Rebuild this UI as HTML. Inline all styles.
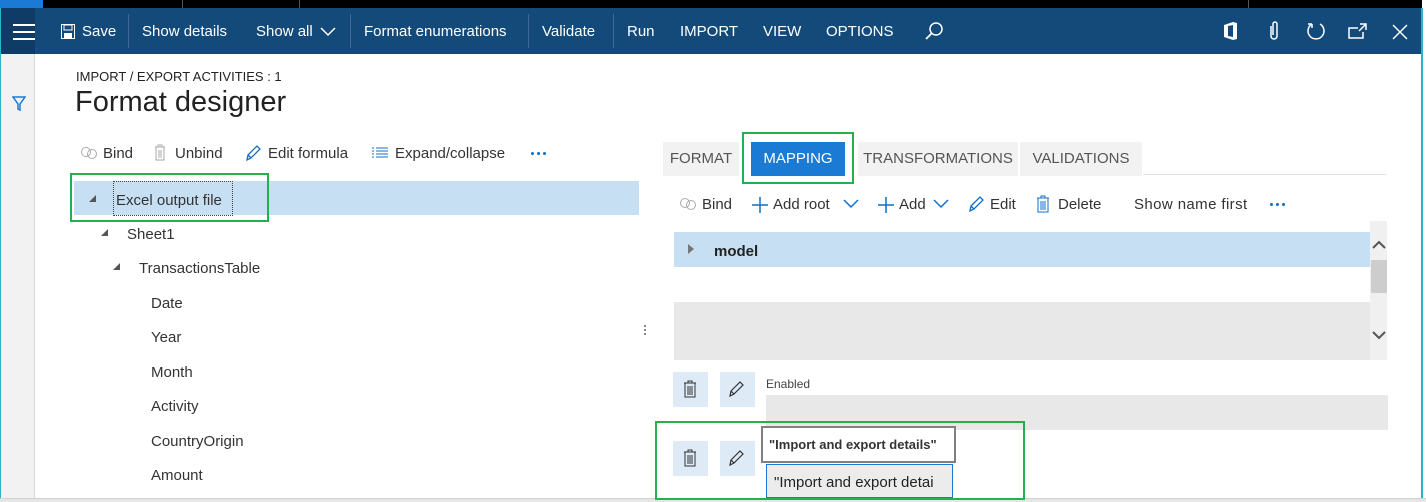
<!DOCTYPE html>
<html><head><style>
*{margin:0;padding:0;box-sizing:border-box}
body{width:1426px;height:502px;overflow:hidden;background:#fff;font-family:"Liberation Sans",sans-serif;position:relative;color:#333}
.a{position:absolute;white-space:nowrap}
.nav{font-size:15px;color:#fff;top:23px}
.sep{position:absolute;top:14px;width:1px;height:34px;background:#3d6a96}
.blue{color:#0f6fc6}
.gray{color:#a6a6a6}
.t{font-size:15px;color:#333}
.g{position:absolute;border:2px solid #22b14c}
.tab{position:absolute;top:142px;height:34px;background:#f2f2f2;font-size:15px;color:#555;line-height:34px;text-align:center}
.dots{position:absolute;width:3px;height:3px;background:#0f6fc6;border-radius:50%;box-shadow:6px 0 #0f6fc6,12px 0 #0f6fc6}
</style></head><body>
<div class="a" style="left:0;top:0;width:1426px;height:8px;background:#000"></div>
<div class="a" style="left:0;top:0;width:43px;height:8px;background:#1a7ad4"></div>
<div class="a" style="left:182px;top:0;width:1px;height:8px;background:#555"></div>
<div class="a" style="left:299px;top:0;width:1px;height:8px;background:#555"></div>
<div class="a" style="left:1248px;top:0;width:1px;height:8px;background:#555"></div>
<div class="a" style="left:0;top:8px;width:1426px;height:46px;background:#134a7a"></div>
<div class="a" style="left:1px;top:8px;width:34px;height:46px;background:#0f3c66"></div>
<div class="a" style="left:1422px;top:0;width:4px;height:502px;background:#fff"></div>
<div class="a" style="left:1421px;top:8px;width:2px;height:494px;background:#2bb5c8"></div>
<div class="a" style="left:0;top:8px;width:1px;height:494px;background:#2bb5c8"></div>
<div class="a" style="left:13px;top:24px;width:22px;height:2px;background:#fff"></div>
<div class="a" style="left:13px;top:31px;width:22px;height:2px;background:#fff"></div>
<div class="a" style="left:13px;top:38px;width:22px;height:2px;background:#fff"></div>
<svg class="a" style="left:61px;top:24px" width="14" height="15" viewBox="0 0 14 15"><rect x="0.5" y="0.5" width="13" height="14" fill="none" stroke="#fff"/><rect x="3" y="1" width="8" height="5" fill="none" stroke="#fff"/><rect x="3" y="9" width="8" height="5" fill="#fff"/></svg>
<div class="a nav" style="left:82px">Save</div>
<div class="sep" style="left:128px"></div>
<div class="a nav" style="left:142px">Show details</div>
<div class="a nav" style="left:256px">Show all</div>
<svg class="a" style="left:320px;top:27px" width="16" height="10"><path d="M1 1l7 7 7-7" stroke="#fff" fill="none" stroke-width="1.5"/></svg>
<div class="sep" style="left:350px"></div>
<div class="a nav" style="left:364px">Format enumerations</div>
<div class="sep" style="left:528px"></div>
<div class="a nav" style="left:542px">Validate</div>
<div class="sep" style="left:613px"></div>
<div class="a nav" style="left:627px">Run</div>
<div class="a nav" style="left:680px">IMPORT</div>
<div class="a nav" style="left:763px">VIEW</div>
<div class="a nav" style="left:826px">OPTIONS</div>
<svg class="a" style="left:924px;top:21px" width="20" height="20"><circle cx="12" cy="8" r="6" stroke="#fff" fill="none" stroke-width="1.5"/><path d="M8 12l-6 6" stroke="#fff" stroke-width="1.8"/></svg>
<svg class="a" style="left:1222px;top:22px" width="16" height="18"><path d="M2 3l9-3 4 1v16l-4 1-9-3z" fill="#fff"/><path d="M6 4l5-1v12l-5-1z" fill="#134a7a"/></svg>
<svg class="a" style="left:1268px;top:21px" width="12" height="20"><path d="M3 5v10a3 3 0 006 0V3a2 2 0 00-4 0v11" stroke="#fff" fill="none" stroke-width="1.5"/></svg>
<svg class="a" style="left:1305px;top:20px" width="22" height="22"><path d="M7 4A8 8 0 1015 4" stroke="#fff" fill="none" stroke-width="1.5"/><path d="M7 4h-4M7 4v4" stroke="#fff" stroke-width="1.5"/></svg>
<svg class="a" style="left:1348px;top:23px" width="20" height="16"><path d="M10 5H1v10h14V9M12 1h6v6M18 1l-7 7" stroke="#fff" fill="none" stroke-width="1.5"/></svg>
<svg class="a" style="left:1392px;top:24px" width="16" height="16"><path d="M1 1l14 14M15 1L1 15" stroke="#fff" stroke-width="1.5"/></svg>
<div class="a" style="left:1px;top:54px;width:34px;height:446px;background:#f2f2f2;border-right:1px solid #d8d8d8"></div>
<svg class="a" style="left:12px;top:96px" width="14" height="16"><path d="M1 1h12l-5 7v6l-2-1V8z" stroke="#1a7ad4" fill="none" stroke-width="1.5"/></svg>
<div class="a" style="left:0;top:498px;width:1426px;height:4px;background:#e6e6e6;border-top:1px solid #d0d0d0"></div>
<div class="a" style="left:76px;top:69px;font-size:13px;color:#222">IMPORT / EXPORT ACTIVITIES : 1</div>
<div class="a" style="left:75px;top:86px;font-size:29px;color:#222">Format designer</div>
<svg class="a" style="left:80px;top:146px" width="18" height="14"><circle cx="6" cy="6" r="4.5" stroke="#aaa" fill="none"/><circle cx="12" cy="8" r="4.5" stroke="#aaa" fill="none"/></svg>
<div class="a t gray" style="left:103px;top:145px">Bind</div>
<svg class="a" style="left:154px;top:144px" width="12" height="17"><path d="M1 3h10M4 3V1h4v2M2 3v13h8V3M5 6v8M7 6v8" stroke="#aaa" fill="none"/></svg>
<div class="a t gray" style="left:175px;top:145px">Unbind</div>
<svg class="a" style="left:245px;top:144px" width="18" height="18"><path d="M2 16l1-5 9-9 3 3-9 9zM3 11l3 3" stroke="#0f6fc6" fill="none" stroke-width="1.3"/></svg>
<div class="a t blue" style="left:268px;top:145px">Edit formula</div>
<svg class="a" style="left:372px;top:147px" width="16" height="12"><path d="M0 1h2M4 1h12M0 4h2M4 4h12M0 7h2M4 7h12M0 10h2M4 10h12" stroke="#0f6fc6"/></svg>
<div class="a t blue" style="left:395px;top:145px">Expand/collapse</div>
<div class="dots" style="left:531px;top:152px"></div>
<div class="a" style="left:74px;top:181px;width:565px;height:34px;background:#c7dff2"></div>
<div class="a" style="left:113px;top:181px;width:120px;height:35px;border:1px dotted #444"></div>
<div class="a" style="left:89px;top:195px;width:0;height:0;border-left:7px solid transparent;border-bottom:7px solid #555"></div>
<div class="a t" style="left:116px;top:192px">Excel output file</div>
<div class="g" style="left:70px;top:173px;width:199px;height:49px"></div>
<div class="a" style="left:101px;top:229px;width:0;height:0;border-left:7px solid transparent;border-bottom:7px solid #555"></div>
<div class="a t" style="left:127px;top:226px">Sheet1</div>
<div class="a" style="left:113px;top:263px;width:0;height:0;border-left:7px solid transparent;border-bottom:7px solid #555"></div>
<div class="a t" style="left:139px;top:260px">TransactionsTable</div>
<div class="a t" style="left:151px;top:295px">Date</div>
<div class="a t" style="left:151px;top:329px">Year</div>
<div class="a t" style="left:151px;top:364px">Month</div>
<div class="a t" style="left:151px;top:398px">Activity</div>
<div class="a t" style="left:151px;top:433px">CountryOrigin</div>
<div class="a t" style="left:151px;top:467px">Amount</div>
<div class="a" style="left:644px;top:325px;width:2px;height:2px;background:#888;box-shadow:0 4px #888,0 8px #888"></div>
<div class="tab" style="left:663px;width:76px">FORMAT</div>
<div class="tab" style="left:751px;width:94px;background:#1a7ad4;color:#fff">MAPPING</div>
<div class="g" style="left:742px;top:132px;width:112px;height:52px"></div>
<div class="tab" style="left:858px;width:160px">TRANSFORMATIONS</div>
<div class="tab" style="left:1020px;width:122px">VALIDATIONS</div>
<div class="a" style="left:1143px;top:174px;width:243px;height:1px;background:#e0e0e0"></div>
<svg class="a" style="left:679px;top:197px" width="18" height="14"><circle cx="6" cy="6" r="4.5" stroke="#aaa" fill="none"/><circle cx="12" cy="8" r="4.5" stroke="#aaa" fill="none"/></svg>
<div class="a t gray" style="left:702px;top:196px">Bind</div>
<svg class="a" style="left:751px;top:196px" width="18" height="18"><path d="M9 1v16M1 9h16" stroke="#0f6fc6" stroke-width="1.5"/></svg>
<div class="a t blue" style="left:773px;top:196px">Add root</div>
<svg class="a" style="left:843px;top:199px" width="16" height="10"><path d="M1 1l7 7 7-7" stroke="#0f6fc6" fill="none" stroke-width="1.5"/></svg>
<svg class="a" style="left:877px;top:196px" width="18" height="18"><path d="M9 1v16M1 9h16" stroke="#0f6fc6" stroke-width="1.5"/></svg>
<div class="a t blue" style="left:899px;top:196px">Add</div>
<svg class="a" style="left:933px;top:199px" width="16" height="10"><path d="M1 1l7 7 7-7" stroke="#0f6fc6" fill="none" stroke-width="1.5"/></svg>
<svg class="a" style="left:968px;top:195px" width="18" height="18"><path d="M2 16l1-5 9-9 3 3-9 9zM3 11l3 3" stroke="#0f6fc6" fill="none" stroke-width="1.3"/></svg>
<div class="a t blue" style="left:990px;top:196px">Edit</div>
<svg class="a" style="left:1036px;top:195px" width="14" height="18"><path d="M1 3h12M5 3V1h4v2M2 3v14h10V3M5 6v9M7 6v9M9 6v9" stroke="#0f6fc6" fill="none"/></svg>
<div class="a t blue" style="left:1058px;top:196px">Delete</div>
<div class="a t blue" style="left:1134px;top:196px;letter-spacing:0.4px">Show name first</div>
<div class="dots" style="left:1270px;top:203px"></div>
<div class="a" style="left:674px;top:232px;width:696px;height:35px;background:#c7dff2"></div>
<div class="a" style="left:688px;top:244px;width:0;height:0;border-top:5px solid transparent;border-bottom:5px solid transparent;border-left:6px solid #777"></div>
<div class="a t" style="left:714px;top:243px;font-weight:bold;color:#222">model</div>
<div class="a" style="left:674px;top:302px;width:696px;height:58px;background:#e8e8e8"></div>
<div class="a" style="left:1370px;top:221px;width:17px;height:139px;background:#f0f0f0"></div>
<div class="a" style="left:1371px;top:260px;width:16px;height:33px;background:#cdcdcd"></div>
<svg class="a" style="left:1372px;top:240px" width="14" height="10"><path d="M1 8l6-6 6 6" stroke="#555" fill="none" stroke-width="2"/></svg>
<svg class="a" style="left:1372px;top:330px" width="14" height="10"><path d="M1 2l6 6 6-6" stroke="#555" fill="none" stroke-width="2"/></svg>
<div class="a" style="left:673px;top:372px;width:35px;height:35px;background:#deebf7"></div>
<div class="a" style="left:720px;top:372px;width:35px;height:35px;background:#deebf7"></div>
<div class="a" style="left:673px;top:441px;width:35px;height:35px;background:#deebf7"></div>
<div class="a" style="left:720px;top:441px;width:35px;height:35px;background:#deebf7"></div>
<svg class="a" style="left:683px;top:380px" width="14" height="18"><path d="M1 3h12M5 3V1h4v2M2 3v14h10V3M5 6v9M7 6v9M9 6v9" stroke="#333" fill="none"/></svg>
<svg class="a" style="left:683px;top:449px" width="14" height="18"><path d="M1 3h12M5 3V1h4v2M2 3v14h10V3M5 6v9M7 6v9M9 6v9" stroke="#333" fill="none"/></svg>
<svg class="a" style="left:728px;top:380px" width="18" height="18"><path d="M2 16l1-5 9-9 3 3-9 9zM3 11l3 3" stroke="#333" fill="none" stroke-width="1.2"/></svg>
<svg class="a" style="left:728px;top:449px" width="18" height="18"><path d="M2 16l1-5 9-9 3 3-9 9zM3 11l3 3" stroke="#333" fill="none" stroke-width="1.2"/></svg>
<div class="a" style="left:766px;top:377px;font-size:12px;color:#444">Enabled</div>
<div class="a" style="left:766px;top:395px;width:622px;height:35px;background:#e8e8e8"></div>
<div class="g" style="left:655px;top:421px;width:370px;height:79px"></div>
<div class="a" style="left:761px;top:426px;width:195px;height:37px;background:#fff;border:2px solid #808080;font-size:13px;font-weight:bold;color:#333;padding:9px 0 0 6px">"Import and export details"</div>
<div class="a" style="left:766px;top:464px;width:187px;height:34px;background:#ececec;border:1px solid #1a7ad4;font-size:15px;color:#222;padding:9px 0 0 7px;overflow:hidden">"Import and export detai</div>
</body></html>
